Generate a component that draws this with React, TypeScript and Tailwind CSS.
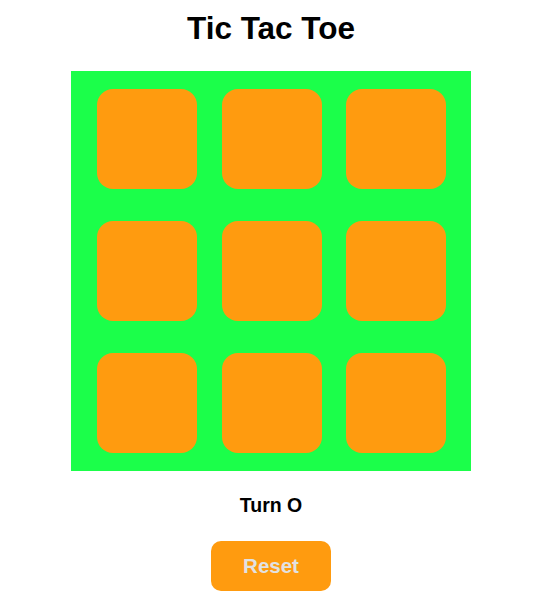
import { useState } from 'react'

export default function App() {
  const [board, setBoard] = useState<string[]>(Array(9).fill(''))
  const [turn, setTurn] = useState('O')

  const play = (i: number) => {
    if (board[i]) return
    const next = [...board]
    next[i] = turn
    setBoard(next)
    setTurn(turn === 'O' ? 'X' : 'O')
  }

  return (
    <div className="w-[542px] flex flex-col items-center pt-[10px] font-['Liberation_Sans',Arial,sans-serif] text-black">
      <h1 className="text-[31.5px] leading-[37px] font-bold">Tic Tac Toe</h1>

      {/* Board */}
      <div className="mt-[24px] w-[400px] h-[400px] bg-[#1bff4a] grid grid-cols-[repeat(3,100px)] grid-rows-[repeat(3,100px)] pl-[26px] pr-[25px] py-[18px] gap-x-[24.5px] gap-y-[32px]">
        {board.map((cell, i) => (
          <button
            key={i}
            onClick={() => play(i)}
            className="w-[100px] h-[100px] rounded-[16px] bg-[#ff9b0f] text-[48px] font-bold text-white flex items-center justify-center"
          >
            {cell}
          </button>
        ))}
      </div>

      <p className="mt-[23px] text-[19.5px] leading-[22px] font-bold">Turn {turn}</p>

      <button
        onClick={() => {
          setBoard(Array(9).fill(''))
          setTurn('O')
        }}
        className="mt-[25px] w-[120px] h-[50px] rounded-[10px] bg-[#ff9b0f] text-[20.5px] font-bold text-[#e2e2e2] flex items-center justify-center"
      >
        Reset
      </button>
    </div>
  )
}
